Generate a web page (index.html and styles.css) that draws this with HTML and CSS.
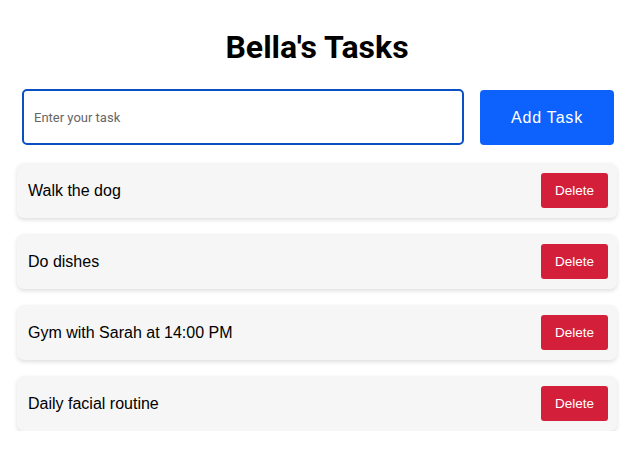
FILE: index.html
```html
<!DOCTYPE html>
<html>
<head>
<meta charset="utf-8">
<link rel="stylesheet" href="styles.css">
</head>
<body>
<div class="app">
  <h1 class="title">Bella's Tasks</h1>
  <form class="add-form">
    <input class="task-input" type="text" placeholder="Enter your task">
    <button class="add-btn" type="button">Add Task</button>
  </form>
  <ul class="task-list">
    <li class="task"><span class="task-text">Walk the dog</span><button class="del-btn" type="button">Delete</button></li>
    <li class="task"><span class="task-text">Do dishes</span><button class="del-btn" type="button">Delete</button></li>
    <li class="task"><span class="task-text">Gym with Sarah at 14:00 PM</span><button class="del-btn" type="button">Delete</button></li>
    <li class="task"><span class="task-text">Daily facial routine</span><button class="del-btn" type="button">Delete</button></li>
  </ul>
</div>
</body>
</html>
```
FILE: styles.css
```css
* { box-sizing: border-box; }
html, body { margin: 0; background: #fff; }
body { font-family: "Liberation Sans", Arial, sans-serif; color: #000; padding-left: 2px; }
.app {
  width: 600px;
  margin: 0 auto;
  padding-top: 27px;
}
.title {
  margin: 0 0 22px;
  text-align: center;
  font-family: Roboto, sans-serif;
  font-weight: 700;
  font-size: 32px;
  line-height: 40px;
}
.add-form {
  display: flex;
  gap: 16px;
  padding: 0 3px 0 5px;
  margin: 0 0 18px;
}
.task-input {
  flex: 1;
  height: 56px;
  border: 2px solid #0a4fc4;
  border-radius: 5px;
  padding: 0 10px;
  font-family: Roboto, sans-serif;
  font-size: 13px;
  color: #333;
  outline: none;
}
.task-input::placeholder { color: #666; }
.add-btn {
  width: 134px;
  height: 55px;
  margin-top: 1px;
  border: none;
  border-radius: 4px;
  background: #0d62fd;
  color: #fff;
  font-family: "Liberation Sans", Arial, sans-serif;
  font-size: 16px;
  letter-spacing: 0.8px;
}
.task-list {
  list-style: none;
  margin: 0;
  padding: 0;
  display: flex;
  flex-direction: column;
  gap: 16px;
}
.task {
  display: flex;
  align-items: center;
  justify-content: space-between;
  height: 55px;
  padding: 0 9px 0 11px;
  background: #f6f6f6;
  border-radius: 7px;
  box-shadow: 0 2px 4px rgba(0,0,0,0.13);
  font-size: 16px;
}
.del-btn {
  width: 67px;
  height: 35px;
  border: none;
  border-radius: 3px;
  background: #d41f3b;
  color: #fff;
  font-family: "Liberation Sans", Arial, sans-serif;
  font-size: 13.5px;
}
```
